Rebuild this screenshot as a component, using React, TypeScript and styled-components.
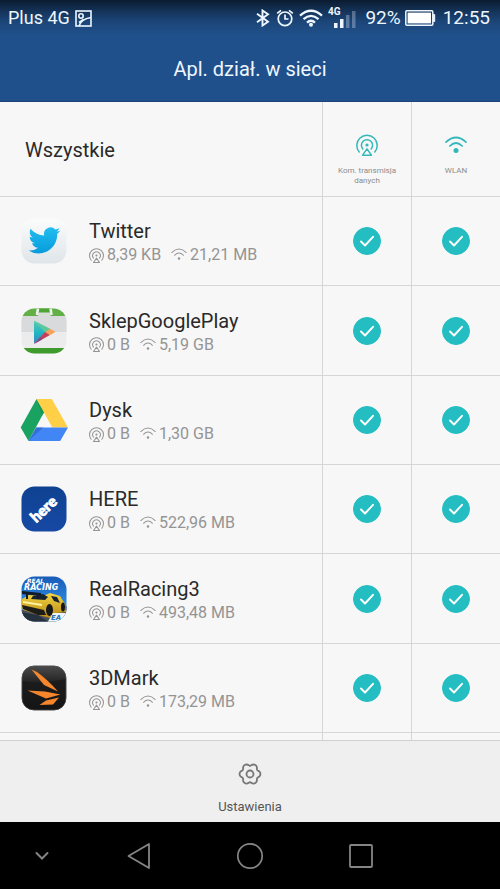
import React, { useState } from "react";
import styled, { createGlobalStyle } from "styled-components";

const GlobalStyle = createGlobalStyle`
  *, *::before, *::after { box-sizing: border-box; }
  body {
    margin: 0;
    background: #000;
    font-family: Roboto, "Noto Sans", sans-serif;
  }
  button { font: inherit; }
`;

const teal = "#24bec2";
const line = "#d6d6d6";

const Screen = styled.div`
  display: flex;
  flex-direction: column;
  height: 100vh;
  background: #f7f7f7;
`;

const Header = styled.header`
  flex: none;
  color: #eef6ff;
  background: linear-gradient(#0a1b2f 0, #15355c 12px, #1c4679 22px, #20508b 36px);
  border-bottom: 1px solid #1c4479;
`;

const StatusBar = styled.div`
  display: flex;
  align-items: center;
  justify-content: space-between;
  height: 36px;
  padding: 0 10px 0 8px;
  line-height: 24px;
`;

const StatusGroup = styled.div`
  display: flex;
  align-items: center;
  gap: 5px;
`;

const Carrier = styled.span`
  font-size: 18px;
`;

const Reading = styled.span`
  font-size: 19px;
`;

const Power = styled.span`
  display: flex;
  align-items: center;
  gap: 4px;
  margin: 0 2px 0 4px;
`;

const Title = styled.h1`
  margin: 0;
  padding: 21px 0 20px;
  font-size: 20px;
  line-height: 24px;
  font-weight: 400;
  text-align: center;
`;

const List = styled.main`
  flex: 1;
  min-height: 0;
  overflow-y: auto;
  scrollbar-width: none;
`;

const Table = styled.table`
  width: 100%;
  table-layout: fixed;
  border-spacing: 0;
`;

const SwitchColumn = styled.col`
  width: 89px;
`;

const HeadRow = styled.tr`
  height: 95px;
`;

const Row = styled.tr`
  height: 89px;
  &:nth-child(3n + 2) {
    height: 90px;
  }
`;

const AllHeading = styled.th`
  padding: 2px 25px 0;
  border-bottom: 1px solid ${line};
  color: #2a2a2a;
  font-size: 20px;
  font-weight: 400;
  text-align: left;
`;

const NetworkHeading = styled.th`
  padding: 32px 8px 0;
  border-left: 1px solid ${line};
  border-bottom: 1px solid ${line};
  color: #8c8c8c;
  font-size: 8px;
  line-height: 10px;
  font-weight: 400;
  text-align: center;
  vertical-align: top;
`;

const HeadingIcon = styled.span`
  display: flex;
  align-items: center;
  justify-content: center;
  height: 22px;
  margin-bottom: 10px;
  color: #34b8ba;
`;

const AppCell = styled.th`
  padding: 0 8px 0 20px;
  border-bottom: 1px solid ${line};
  font-weight: 400;
  text-align: left;
`;

const AppInfo = styled.div`
  display: flex;
  align-items: center;
  gap: 21px;
`;

const AppIcon = styled.svg`
  flex: none;
  width: 48px;
  height: 48px;
`;

const AppText = styled.div`
  padding-top: 4px;
  line-height: 24px;
`;

const AppName = styled.div`
  color: #2a2a2a;
  font-size: 20px;
`;

const Usage = styled.div`
  display: flex;
  gap: 10px;
  color: #949494;
  font-size: 16px;
`;

const Amount = styled.span`
  display: flex;
  align-items: center;
  gap: 3px;
  white-space: nowrap;
`;

const SwitchCell = styled.td`
  padding: 0;
  border-left: 1px solid ${line};
  border-bottom: 1px solid ${line};
`;

const SwitchLabel = styled.label`
  display: grid;
  place-items: center;
  cursor: pointer;
  > * {
    grid-area: 1 / 1;
  }
`;

const Check = styled.input`
  appearance: none;
  width: 28px;
  height: 28px;
  margin: 0;
  border: 1px solid #b5b5b5;
  border-radius: 50%;
  &:checked {
    border-color: ${teal};
    background: ${teal};
  }
`;

const Tick = styled.svg`
  width: 14px;
  height: 12px;
  pointer-events: none;
`;

const Toolbar = styled.footer`
  display: flex;
  flex: none;
  justify-content: center;
  border-top: 1px solid #d0d0d0;
  background: #efefef;
`;

const SettingsButton = styled.button`
  display: flex;
  flex-direction: column;
  align-items: center;
  gap: 14px;
  padding: 22px 24px 7px;
  border: 0;
  background: none;
  color: #555;
  font-size: 13px;
  line-height: 16px;
`;

const NavBar = styled.nav`
  display: grid;
  flex: none;
  grid-template-columns: 3fr 4fr 4fr 4fr 3fr;
  height: 67px;
  background: #000;
`;

const NavButton = styled.button`
  display: flex;
  align-items: center;
  justify-content: center;
  padding: 0;
  border: 0;
  background: none;
  color: #858585;
`;

function MobileIcon({ size, stroke }: { size: number; stroke: number }) {
  return (
    <svg width={size} height={size} viewBox="0 0 22 22" fill="none" stroke="currentColor" strokeWidth={stroke} strokeLinecap="round" strokeLinejoin="round" aria-hidden="true">
      <path d="M3.2 18A10.2 10.2 0 1 1 18.8 18" />
      <path d="M6.800 15A5.600 5.600 0 1 1 15.200 15" />
      <path d="M11 14.800 6.600 21.200h8.800z" />
      <circle cx="11" cy="11" r="1.600" fill="currentColor" stroke="none" />
    </svg>
  );
}

function WlanIcon({ width, stroke, dot }: { width: number; stroke: number; dot: number }) {
  return (
    <svg width={width} viewBox="0 0 22 18" fill="none" stroke="currentColor" strokeWidth={stroke} strokeLinecap="round" aria-hidden="true">
      <path d="M1 6.200Q11-3.200 21 6.200" />
      <path d="M4.800 10Q11 4 17.200 10" />
      <circle cx="11" cy="14.600" r={dot} fill="currentColor" stroke="none" />
    </svg>
  );
}

const gearPath =
  Array.from({ length: 72 }, (_, i) => {
    const a = (i * Math.PI) / 36;
    const r = 9.5 + 1.1 * Math.cos(6 * a) - 0.2 * Math.cos(12 * a);
    return `${i ? "L" : "M"}${(12 + r * Math.cos(a)).toFixed(2)} ${(11 + r * Math.sin(a)).toFixed(2)}`;
  }).join("") + "Z";

function GearIcon() {
  return (
    <svg width="24" height="22" viewBox="0 0 24 22" fill="none" stroke="#777" strokeWidth="1.800" aria-hidden="true">
      <path d={gearPath} strokeLinejoin="round" />
      <circle cx="12" cy="11" r="3.500" />
    </svg>
  );
}

function PictureIcon() {
  return (
    <svg width="17" height="17" viewBox="0 0 17 17" fill="none" stroke="currentColor" strokeWidth="1.600" aria-hidden="true">
      <rect x="1" y="1" width="15" height="15" />
      <circle cx="6" cy="6" r="2.200" />
      <path d="M4 16C5.500 10.500 9.500 8.500 16 7.500M8.500 9.500 4 12.500" />
    </svg>
  );
}

function BluetoothIcon() {
  return (
    <svg width="15" height="18" viewBox="0 0 15 18" fill="none" stroke="currentColor" strokeWidth="1.900" aria-hidden="true">
      <path d="M1 4.800 12 12.800 6.500 16.500V1.500L12 5.200 1 13.200" />
    </svg>
  );
}

function AlarmIcon() {
  return (
    <svg width="18" height="18" viewBox="0 0 18 18" fill="none" stroke="currentColor" strokeWidth="1.700" aria-hidden="true">
      <circle cx="9" cy="9.800" r="6.800" />
      <path d="M9 5.500V10h3.500M1.200 4.400 5 1.300M16.800 4.400 13 1.300" />
    </svg>
  );
}

function StatusWifiIcon() {
  return (
    <svg width="24" height="18" viewBox="0 0 24 18" fill="none" stroke="currentColor" strokeWidth="2.300" aria-hidden="true">
      <path d="M1 6.600Q12-3 23 6.600M4.500 10.200Q12 3.600 19.500 10.200M8 13.600Q12 9.800 16 13.600" />
      <circle cx="12" cy="15.800" r="2" fill="currentColor" stroke="none" />
    </svg>
  );
}

function SignalIcon() {
  return (
    <svg width="28" height="22" viewBox="0 0 28 22" fill="currentColor" aria-hidden="true">
      <text x="0" y="8" fontSize="10" fontWeight="700">4G</text>
      <rect x="6" y="16" width="3.500" height="5" />
      <rect x="12" y="12" width="3.500" height="9" />
      <rect x="18" y="8" width="3.500" height="13" opacity=".3" />
      <rect x="24" y="4" width="3.500" height="17" opacity=".3" />
    </svg>
  );
}

function BatteryIcon() {
  return (
    <svg width="31" height="16" viewBox="0 0 31 16" aria-hidden="true">
      <rect x=".8" y=".8" width="27" height="14.400" rx="1" fill="none" stroke="currentColor" strokeWidth="1.500" />
      <rect x="2.600" y="2.600" width="23.400" height="10.800" fill="#fff" />
      <path d="M28.500 4.500h1.200v7h-1.200z" fill="currentColor" stroke="currentColor" />
    </svg>
  );
}

function TwitterArt() {
  return (
    <AppIcon viewBox="0 0 48 48" aria-hidden="true">
      <defs>
        <linearGradient id="twTile" x2="0" y2="1"><stop stopColor="#fbfcfc" /><stop offset="1" stopColor="#dfe5e9" /></linearGradient>
        <linearGradient id="twBird" x2="0" y2="1"><stop stopColor="#22bdef" /><stop offset="1" stopColor="#079bdc" /></linearGradient>
      </defs>
      <rect x="1.500" y="1.500" width="45" height="45" rx="13" fill="url(#twTile)" />
      <path transform="translate(8.500 7.500) scale(1.330)" fill="url(#twBird)" d="M23.953 4.570a10 10 0 01-2.825.775 4.958 4.958 0 002.163-2.723c-.951.555-2.005.959-3.127 1.184a4.920 4.920 0 00-8.384 4.482C7.690 8.095 4.067 6.130 1.640 3.162a4.822 4.822 0 00-.666 2.475c0 1.710.870 3.213 2.188 4.096a4.904 4.904 0 01-2.228-.616v.060a4.923 4.923 0 003.946 4.827 4.996 4.996 0 01-2.212.085 4.936 4.936 0 004.604 3.417 9.867 9.867 0 01-6.102 2.105c-.390 0-.779-.023-1.170-.067a13.995 13.995 0 007.557 2.209c9.053 0 13.998-7.496 13.998-13.985 0-.210 0-.420-.015-.630A9.935 9.935 0 0024 4.590z" />
    </AppIcon>
  );
}

function PlayArt() {
  return (
    <AppIcon viewBox="0 0 48 48" aria-hidden="true">
      <defs>
        <clipPath id="playClip"><rect x="1.500" y="1.500" width="45" height="45" rx="13" /></clipPath>
        <linearGradient id="playBlue" x2="0" y2="1"><stop stopColor="#55c9b5" /><stop offset=".55" stopColor="#20b4c3" /><stop offset="1" stopColor="#4381b8" /></linearGradient>
      </defs>
      <g clipPath="url(#playClip)">
        <path fill="#ececec" d="M0 0h48v48H0z" />
        <path fill="#d8dadb" d="M0 9h48v16H0z" />
        <path fill="#62af45" d="M0 0h48v9H0z" />
        <path fill="#4fa534" d="M16.500 1h15v5h-15z" />
        <path fill="none" stroke="#eef2ec" strokeWidth="2.600" d="M18 1l-1 7M30.500 1l1 7" />
        <path fill="#d9ddd8" d="M18 5.500h12.500v3.500H18z" />
        <path fill="#3f9b2c" d="M0 41h48v7H0z" />
      </g>
      <path fill="url(#playBlue)" d="M14 14v22.500l12.500-11.700z" />
      <path fill="#5bc9a0" d="M14 13.500 30.500 22l-5 4z" />
      <path fill="#c53f58" d="M14 37 25.500 24.500l4.500 3.500z" />
      <path fill="#7b4a8d" d="M14 37l6.500-7 1.500 2.500z" />
      <path fill="#f4a259" d="M30 21.700 35.500 24.700 30 28.300 25 25z" />
    </AppIcon>
  );
}

function DriveArt() {
  return (
    <AppIcon viewBox="0 0 48 48" aria-hidden="true">
      <path fill="#1aa260" d="M16.500 3 24 16.300 8.500 45 .7 31.500z" />
      <path fill="#ffcf48" d="M16.500 3h15.300L48 31.500H32.300z" />
      <path fill="#4286f5" d="M16.200 31.500H48L40.200 45H8.500z" />
      <path fill="#178e53" d="M16.500 3 24 16.300 22 20z" opacity=".6" />
      <path fill="#2f66c9" d="M16.200 31.500h7L8.500 45z" opacity=".7" />
    </AppIcon>
  );
}

function HereArt() {
  return (
    <AppIcon viewBox="0 0 48 48" aria-hidden="true">
      <defs>
        <linearGradient id="hereTile" x2="0" y2="1"><stop stopColor="#0e4290" /><stop offset="1" stopColor="#1749a5" /></linearGradient>
      </defs>
      <rect x="1.500" y="1.500" width="45" height="45" rx="13" fill="url(#hereTile)" />
      <text transform="translate(24.500 25) rotate(-43)" textAnchor="middle" y="4" fontFamily="Lato, sans-serif" fontSize="15" fontWeight="900" fill="#fff" stroke="#fff" strokeWidth=".8">here</text>
    </AppIcon>
  );
}

function RacingArt() {
  return (
    <AppIcon viewBox="0 0 48 48" aria-hidden="true">
      <defs>
        <clipPath id="rrClip"><rect x="1.500" y="1.500" width="45" height="45" rx="13" /></clipPath>
        <linearGradient id="rrSky" x2="0" y2="1"><stop stopColor="#1559b5" /><stop offset=".6" stopColor="#2e89df" /><stop offset="1" stopColor="#83bdec" /></linearGradient>
        <linearGradient id="rrCar" x2="0" y2="1"><stop stopColor="#f3d346" /><stop offset="1" stopColor="#b88a12" /></linearGradient>
      </defs>
      <g clipPath="url(#rrClip)">
        <path fill="url(#rrSky)" d="M0 0h48v48H0z" />
        <path fill="#48505c" d="M0 35l48-4v17H0z" />
        <path fill="#26313f" d="M0 37l18 3 12 8H0z" />
        <path fill="url(#rrCar)" d="M2 24l7-4 14 1 7-3 10 3 5 8 1 8-9 1-7 5-8-2-19-6-2-5z" />
        <path fill="#17232d" d="M13 21l10-2 5 3-3 3-14-1zM31 21l6 1 3 6-6-2z" />
        <path fill="#1d1c17" d="M2 30l22 5 2 5-8 0-15-6z" />
        <path fill="#fff2a0" d="M3 26l19 3v2L3 28z" />
        <ellipse cx="29.500" cy="35" rx="3.500" ry="6" fill="#15171a" />
        <ellipse cx="43" cy="32" rx="2" ry="4.500" fill="#15171a" />
        <path fill="#111b29" d="M2 16l19 2v3L2 19zM6 19h2v5H6zM17 20h2v4h-2z" />
        <path fill="#eef4fa" d="M33 38h15v10H27z" />
        <g fontFamily="DejaVu Sans, sans-serif" fontStyle="italic" fontWeight="700" fill="#fff">
          <text x="7" y="8" fontSize="6">REAL</text>
          <text x="4" y="15" fontSize="8">RACING</text>
          <text x="31" y="45" fontSize="7" fill="#2475b9">EA</text>
        </g>
      </g>
    </AppIcon>
  );
}

function MarkArt() {
  return (
    <AppIcon viewBox="0 0 48 48" aria-hidden="true">
      <defs>
        <linearGradient id="markTile" x2="0" y2="1"><stop stopColor="#4a4a4a" /><stop offset=".35" stopColor="#262626" /><stop offset="1" stopColor="#171717" /></linearGradient>
      </defs>
      <rect x="2" y="2" width="44" height="44" rx="12" fill="url(#markTile)" stroke="#4d4d4d" />
      <path fill="#111" d="M2.500 17Q24 20 45.500 15v19Q45 46 34 45.500H14Q2.500 45 2.500 34z" opacity=".5" />
      <path fill="#f5862b" d="M11.500 5.500 17 8Q28 16 38 27.500L24 21zM7.500 26.500l17.500 1 15.500 3-14.500 4zM39 33.500l-6 7-13.500.500 6.500-4.500z" />
    </AppIcon>
  );
}

const apps = [
  { name: "Twitter", mobile: "8,39 KB", wlan: "21,21 MB", Art: TwitterArt },
  { name: "SklepGooglePlay", mobile: "0 B", wlan: "5,19 GB", Art: PlayArt },
  { name: "Dysk", mobile: "0 B", wlan: "1,30 GB", Art: DriveArt },
  { name: "HERE", mobile: "0 B", wlan: "522,96 MB", Art: HereArt },
  { name: "RealRacing3", mobile: "0 B", wlan: "493,48 MB", Art: RacingArt },
  { name: "3DMark", mobile: "0 B", wlan: "173,29 MB", Art: MarkArt },
];

function NetworkSwitch({ label }: { label: string }) {
  const [on, setOn] = useState(true);
  return (
    <SwitchCell>
      <SwitchLabel>
        <Check type="checkbox" aria-label={label} checked={on} onChange={() => setOn(!on)} />
        {on && (
          <Tick viewBox="0 0 14 12" fill="none" stroke="#fff" strokeWidth="1.900" strokeLinecap="round" strokeLinejoin="round" aria-hidden="true">
            <path d="M1 6.500 5 10.500 13 1.800" />
          </Tick>
        )}
      </SwitchLabel>
    </SwitchCell>
  );
}

export default function App() {
  return (
    <Screen>
      <GlobalStyle />
      <Header>
        <StatusBar>
          <StatusGroup>
            <Carrier>Plus 4G</Carrier>
            <PictureIcon />
          </StatusGroup>
          <StatusGroup>
            <BluetoothIcon />
            <AlarmIcon />
            <StatusWifiIcon />
            <SignalIcon />
            <Power>
              <Reading>92%</Reading>
              <BatteryIcon />
            </Power>
            <Reading>12:55</Reading>
          </StatusGroup>
        </StatusBar>
        <Title>Apl. dział. w sieci</Title>
      </Header>
      <List>
        <Table>
          <colgroup>
            <col />
            <SwitchColumn />
            <SwitchColumn />
          </colgroup>
          <thead>
            <HeadRow>
              <AllHeading scope="col">Wszystkie</AllHeading>
              <NetworkHeading scope="col">
                <HeadingIcon><MobileIcon size={22} stroke={1.5} /></HeadingIcon>
                Kom. transmisja danych
              </NetworkHeading>
              <NetworkHeading scope="col">
                <HeadingIcon><WlanIcon width={22} stroke={1.7} dot={2.5} /></HeadingIcon>
                WLAN
              </NetworkHeading>
            </HeadRow>
          </thead>
          <tbody>
            {apps.map(({ name, mobile, wlan, Art }) => (
              <Row key={name}>
                <AppCell scope="row">
                  <AppInfo>
                    <Art />
                    <AppText>
                      <AppName>{name}</AppName>
                      <Usage>
                        <Amount><MobileIcon size={15} stroke={1.5} />{mobile}</Amount>
                        <Amount><WlanIcon width={16} stroke={1.4} dot={1.7} />{wlan}</Amount>
                      </Usage>
                    </AppText>
                  </AppInfo>
                </AppCell>
                <NetworkSwitch label={`${name}: Kom. transmisja danych`} />
                <NetworkSwitch label={`${name}: WLAN`} />
              </Row>
            ))}
            <Row aria-hidden="true">
              <AppCell as="td" />
              <SwitchCell />
              <SwitchCell />
            </Row>
          </tbody>
        </Table>
      </List>
      <Toolbar>
        <SettingsButton type="button">
          <GearIcon />
          Ustawienia
        </SettingsButton>
      </Toolbar>
      <NavBar>
        <NavButton type="button" aria-label="Ukryj pasek">
          <svg width="14" height="10" viewBox="0 0 14 10" fill="none" stroke="currentColor" strokeWidth="2" strokeLinecap="round"><path d="M1.500 2 7 7.500 12.500 2" /></svg>
        </NavButton>
        <NavButton type="button" aria-label="Wstecz">
          <svg width="24" height="28" viewBox="0 0 24 28" fill="none" stroke="currentColor" strokeWidth="1.800" strokeLinejoin="round"><path d="M22 2v24L1.500 14z" /></svg>
        </NavButton>
        <NavButton type="button" aria-label="Ekran główny">
          <svg width="28" height="28" viewBox="0 0 28 28" fill="none" stroke="currentColor" strokeWidth="1.700"><circle cx="14" cy="14" r="12.200" /></svg>
        </NavButton>
        <NavButton type="button" aria-label="Ostatnie">
          <svg width="24" height="24" viewBox="0 0 24 24" fill="none" stroke="currentColor" strokeWidth="1.800"><rect x="1" y="1" width="22" height="22" rx="1" /></svg>
        </NavButton>
      </NavBar>
    </Screen>
  );
}
